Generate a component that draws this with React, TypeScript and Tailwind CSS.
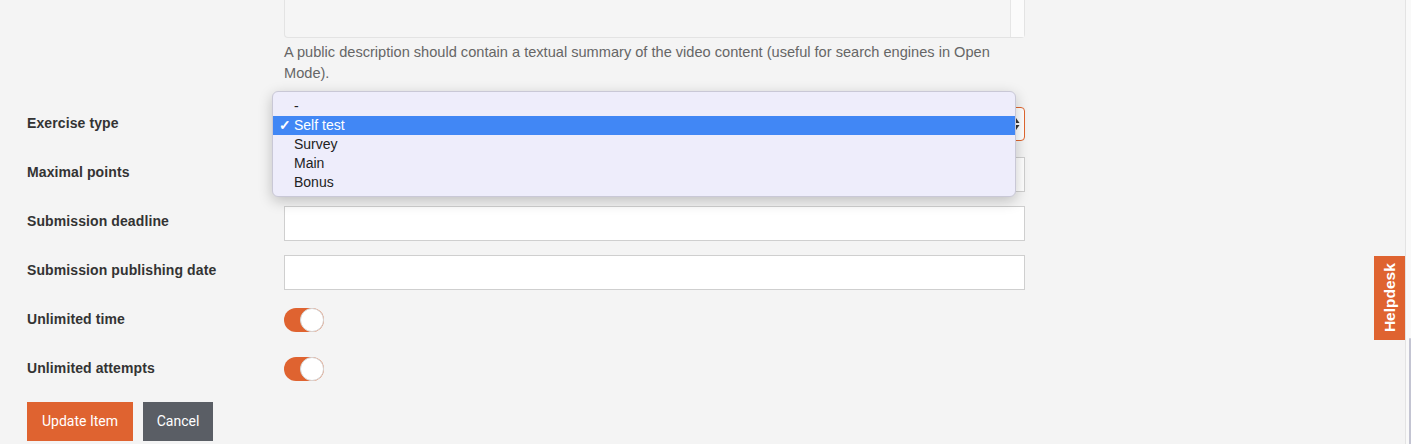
import React from "react";

const labels = [
  "Exercise type",
  "Maximal points",
  "Submission deadline",
  "Submission publishing date",
  "Unlimited time",
  "Unlimited attempts",
];

const options = ["-", "Self test", "Survey", "Main", "Bonus"];

const Label = ({ text }: { text: string }) => (
  <div className="w-[257px] shrink-0 self-center text-[14px] font-bold tracking-[0.1px] text-[#333]">{text}</div>
);

const TextInput = () => <div className="mt-[2px] h-[35px] w-[741px] border border-[#cfcfcf] bg-white" />;

const Toggle = () => (
  <div className="mt-[6px] flex h-[24px] w-[40px] items-center rounded-full bg-[#df6330]">
    <div className="ml-auto h-[24px] w-[24px] rounded-full border border-[#d6d6d6] bg-white" />
  </div>
);

const SelectBox = () => (
  <div className="relative mt-[1px]">
    <div className="flex h-[34px] w-[741px] items-center justify-end rounded-[4px] border border-[#e0662f] bg-white pr-[4px]">
      <svg width="8" height="14" viewBox="0 0 8 14">
        <path d="M4 1 L7.5 6 L0.5 6 Z" fill="#333" />
        <path d="M4 13 L7.5 8 L0.5 8 Z" fill="#333" />
      </svg>
    </div>
    {/* open native dropdown */}
    <div className="absolute left-[-12px] top-[-16px] z-10 w-[744px] rounded-[6px] border border-[#c9c8d6] bg-[#eeedfb] pb-[4px] pt-[5px] shadow-[0_4px_14px_rgba(0,0,0,0.22)]">
      {options.map((o) => (
        <div
          key={o}
          className={
            o === "Self test"
              ? "flex h-[19px] items-center bg-[#4187f5] text-white"
              : "flex h-[19px] items-center text-[#222]"
          }
        >
          <span className="w-[21px] pl-[6px] text-[14px] font-bold">{o === "Self test" ? "✓" : ""}</span>
          <span className="text-[14px]">{o}</span>
        </div>
      ))}
    </div>
  </div>
);

const App = () => {
  return (
    <div className="flex h-[444px] w-[1411px] overflow-hidden bg-[#f4f4f4]" style={{ fontFamily: '"Liberation Sans", Arial, sans-serif' }}>
      <div className="relative flex-1 pl-[27px]">
        <div className="ml-[257px] flex h-[38px] w-[741px] rounded-b-[4px] border border-t-0 border-[#e3e3e3] bg-[#f5f5f5]">
          <div className="flex-1" />
          <div className="w-[14px] border-l border-[#e6e6e6] bg-[#fbfbfb]" />
        </div>
        <p className="ml-[257px] mt-[4px] w-[741px] text-[14.6px] leading-[21px] text-[#666]">
          A public description should contain a textual summary of the video content (useful for search engines in Open
          <br />
          Mode).
        </p>

        <div className="mt-[22px] flex flex-col gap-[15px]">
          {labels.map((l, i) => (
            <div key={l} className="flex h-[34px] items-start">
              <Label text={l} />
              {i === 0 && <SelectBox />}
              {(i === 1 || i === 2 || i === 3) && <TextInput />}
              {i > 3 && <Toggle />}
            </div>
          ))}
          <div className="mt-[2px] flex gap-[10px]">
            <button className="h-[39px] w-[106px] bg-[#df6330] text-[14px] text-white" style={{ fontFamily: "Roboto, sans-serif" }}>
              Update Item
            </button>
            <button className="h-[39px] w-[70px] bg-[#5a5e65] text-[14px] text-white" style={{ fontFamily: "Roboto, sans-serif" }}>
              Cancel
            </button>
          </div>
        </div>

        <div className="absolute right-0 top-[256px] flex h-[84px] w-[31px] items-center justify-center bg-[#df6330]">
          <span className="-rotate-90 whitespace-nowrap text-[15.5px] font-bold text-white">Helpdesk</span>
        </div>
      </div>
      <div className="flex w-[6px] flex-col border-l border-[#e3e3e3] bg-[#f9f9f9]">
        <div className="h-[338px]" />
        <div className="ml-[3px] flex-1 rounded-t-[2px] bg-[#c3c4d2]" />
      </div>
    </div>
  );
};

export default App;
